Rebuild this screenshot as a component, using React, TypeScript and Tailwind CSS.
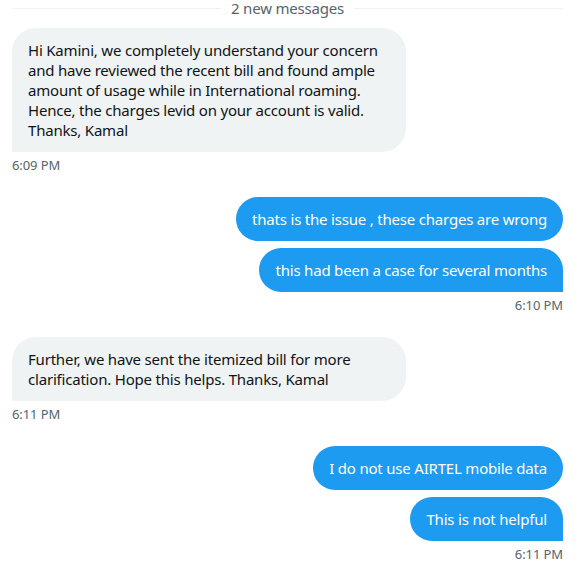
import type { ReactNode } from 'react';

type Msg = {
    id: number;
    side: 'in' | 'out';
    text: string;
    last?: boolean;
};

type Group = {
    side: 'in' | 'out';
    time: string;
    messages: string[];
};

const groups: Group[] = [
    {
        side: 'in',
        time: '6:09 PM',
        messages: [
            'Hi Kamini, we completely understand your concern and have reviewed the recent bill and found ample amount of usage while in International roaming. Hence, the charges levid on your account is valid. Thanks, Kamal',
        ],
    },
    {
        side: 'out',
        time: '6:10 PM',
        messages: ['thats is the issue , these charges are wrong', 'this had been a case for several months'],
    },
    {
        side: 'in',
        time: '6:11 PM',
        messages: ['Further, we have sent the itemized bill for more clarification. Hope this helps. Thanks, Kamal'],
    },
    {
        side: 'out',
        time: '6:11 PM',
        messages: ['I do not use AIRTEL mobile data', 'This is not helpful'],
    },
];

function Bubble({ side, text, last }: Omit<Msg, 'id'>) {
    const base = 'w-fit max-w-[394px] px-4 py-3 text-[15px] leading-5 tracking-[-0.2px] rounded-3xl';
    if (side === 'in') {
        return (
            <div className={`${base} bg-[#eff3f4] text-[#0f1419] ${last ? 'rounded-bl-none' : ''}`}>{text}</div>
        );
    }
    return <div className={`${base} self-end bg-[#1d9bf0] text-white ${last ? 'rounded-br-none' : ''}`}>{text}</div>;
}

function Divider({ children }: { children: ReactNode }) {
    return (
        <div className="flex h-4 items-center gap-2.5">
            <div className="h-px flex-1 bg-[#eff3f4]" />
            <span className="text-[15px] leading-4 tracking-[-0.2px] text-[#536471]">{children}</span>
            <div className="h-px flex-1 bg-[#eff3f4]" />
        </div>
    );
}

export default function App() {
    return (
        <div
            className="h-[568px] w-[578px] overflow-hidden bg-white pl-3 pr-[15px]"
            style={{ fontFamily: '"Segoe UI", "Noto Sans", Arial, sans-serif' }}
        >
            <Divider>2 new messages</Divider>

            <div className="mt-3 flex flex-col gap-6">
                {groups.map((group, gi) => (
                    <div key={gi} className="flex flex-col">
                        <div className="flex flex-col gap-[7px]">
                            {group.messages.map((m, i) => (
                                <Bubble key={i} side={group.side} text={m} last={i === group.messages.length - 1} />
                            ))}
                        </div>
                        <div
                            className={`mt-[5px] text-[13px] leading-4 tracking-[-0.1px] text-[#536471] ${
                                group.side === 'out' ? 'text-right' : ''
                            }`}
                        >
                            {group.time}
                        </div>
                    </div>
                ))}
            </div>
        </div>
    );
}
